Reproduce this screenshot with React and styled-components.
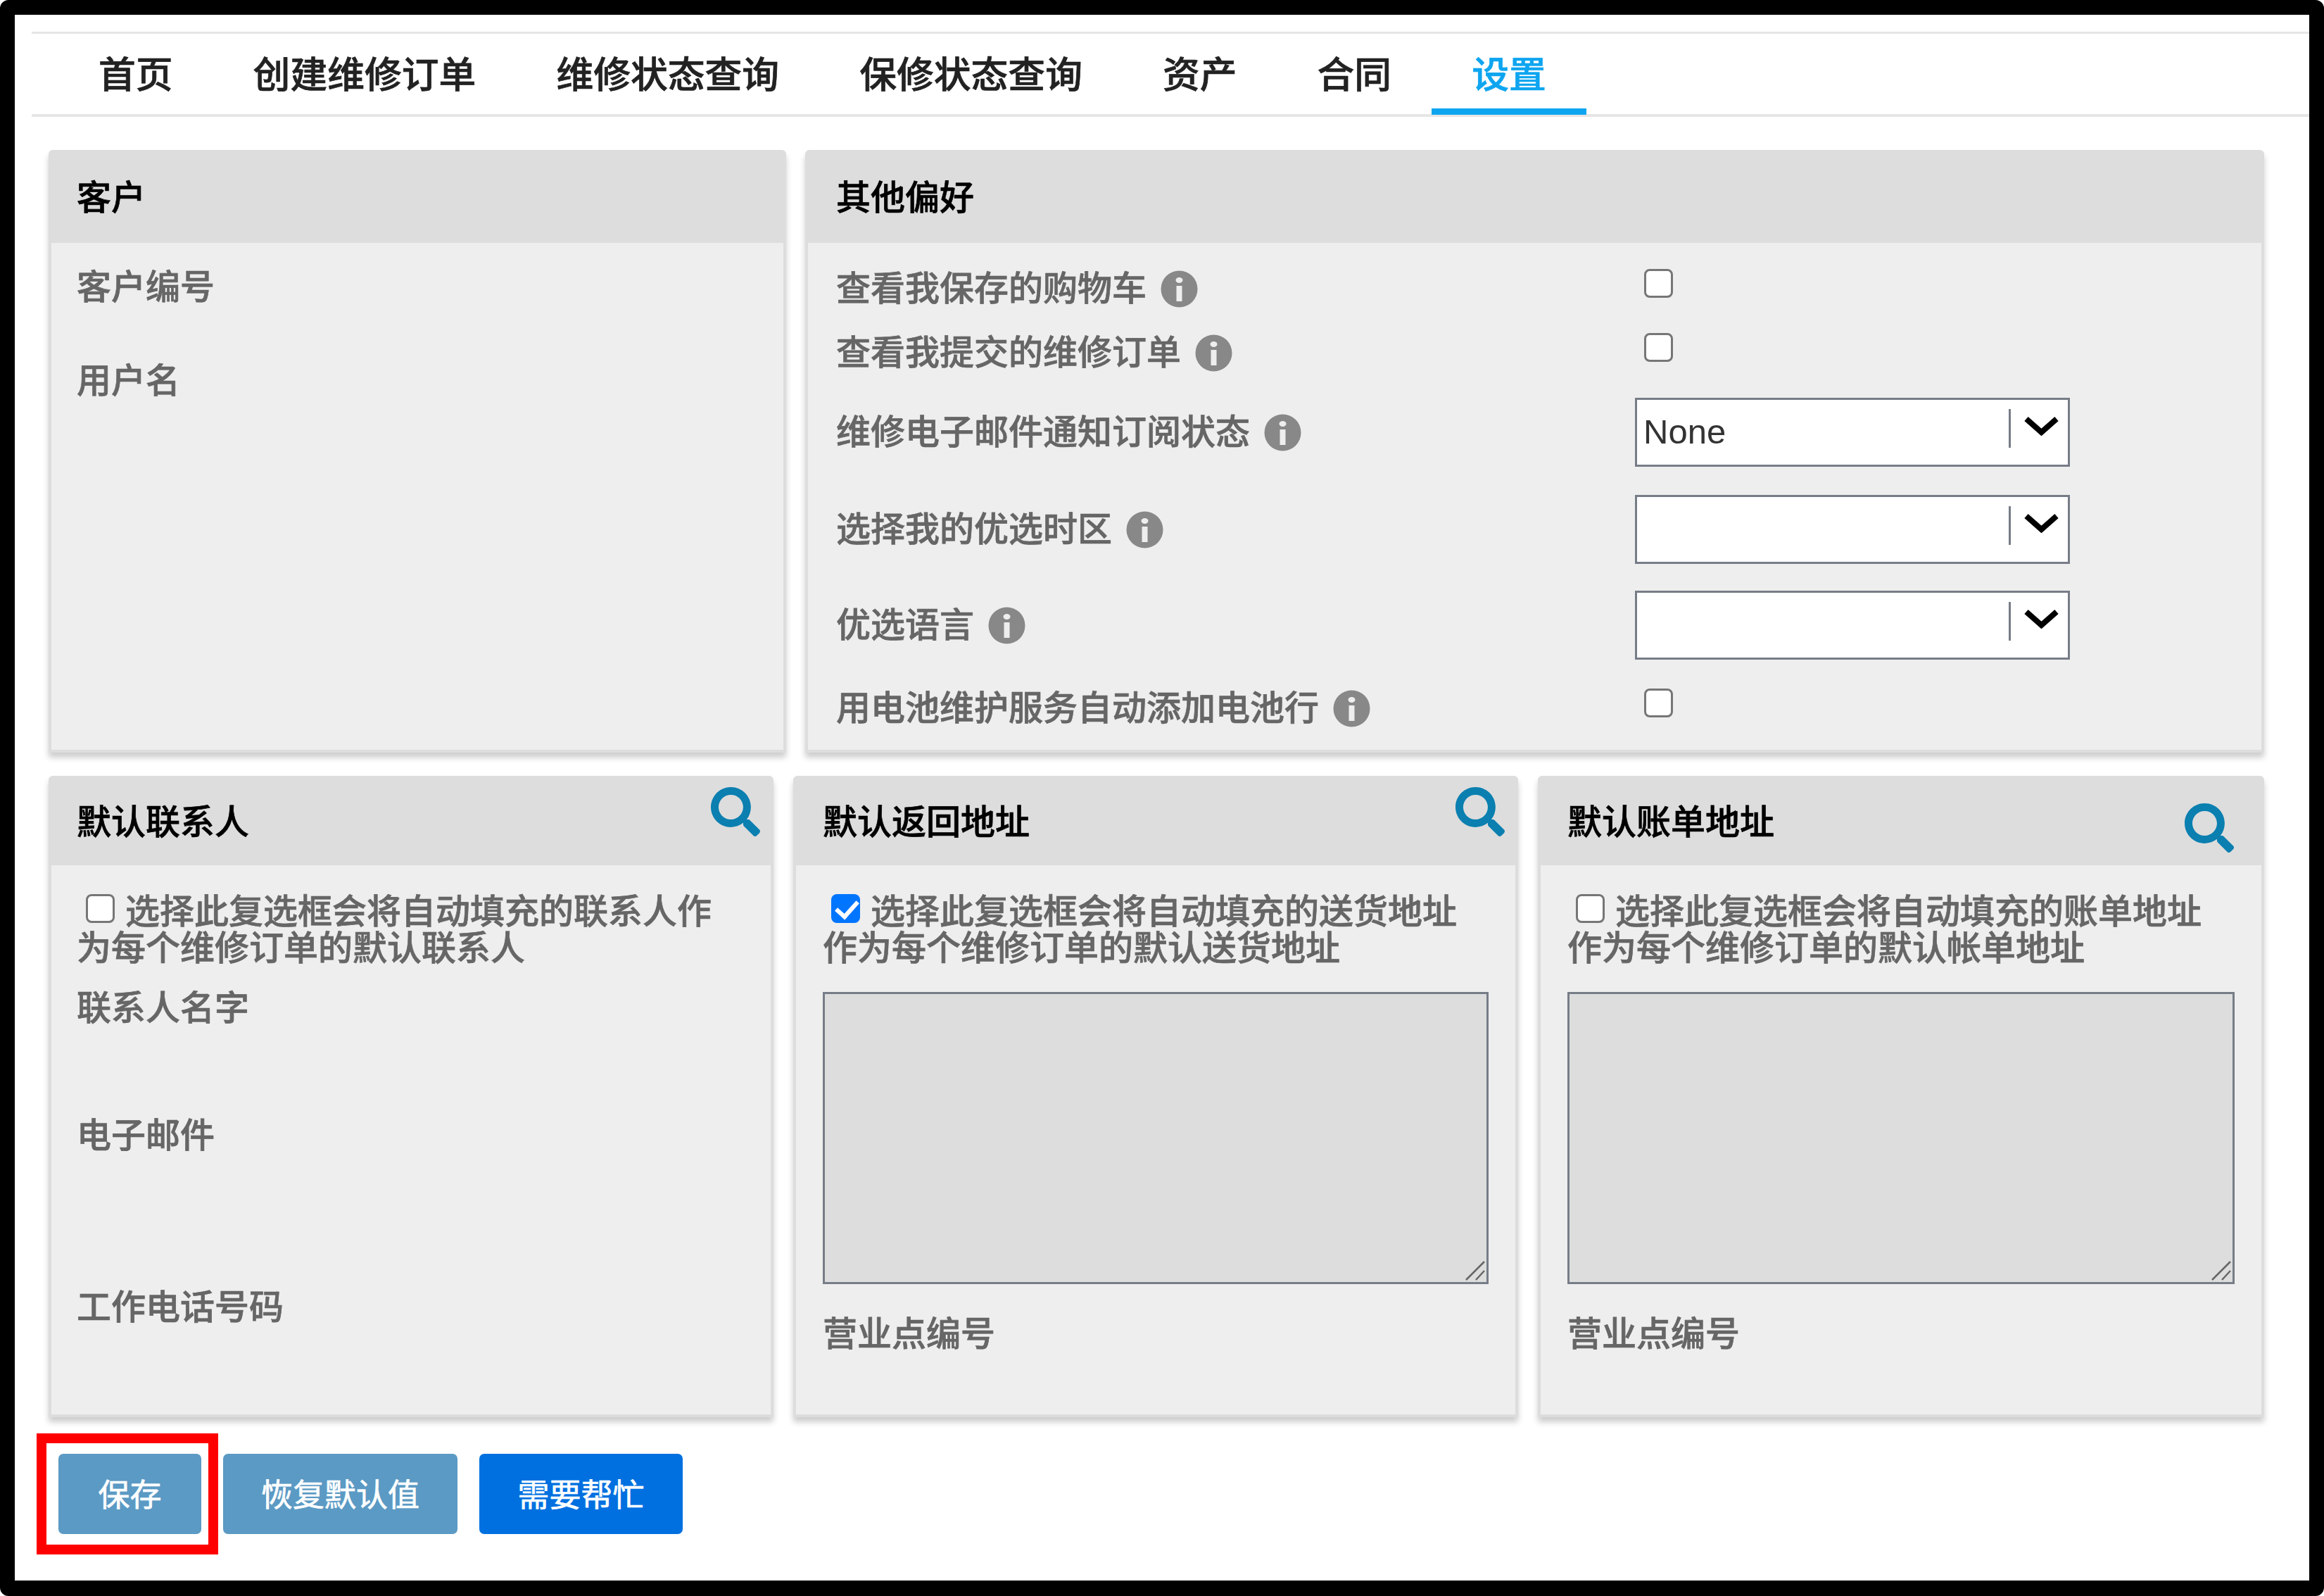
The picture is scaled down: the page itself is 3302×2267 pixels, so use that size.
import React from 'react';
import styled, { createGlobalStyle } from 'styled-components';
import { FaSearch } from 'react-icons/fa';

const GlobalStyle = createGlobalStyle`
  html, body {
    margin: 0;
    padding: 0;
    background: #ffffff;
  }
  * {
    box-sizing: border-box;
  }
`;

const FONT = `"Liberation Sans", "Noto Sans CJK SC", sans-serif`;

const Frame = styled.div`
  width: 3302px;
  height: 2267px;
  border: solid #000000;
  border-width: 21px 21px 22px 21px;
  border-radius: 12px;
  background: #ffffff;
  padding-top: 24px;
  position: relative;
  font-family: ${FONT};
  font-size: 49px;
  line-height: 52px;
  color: #666666;
  -webkit-text-stroke: 0.7px currentColor;
`;

const TabBar = styled.nav`
  display: flex;
  height: 121px;
  margin-left: 24px;
  padding-left: 38px;
  border-top: 3px solid #e6e6e6;
  border-bottom: 4px solid #e6e6e6;
`;

const Tab = styled.a`
  display: flex;
  align-items: center;
  height: 115px;
  padding: 12px 57px 0;
  border-bottom: 9px solid ${(p) => (p.$active ? '#0ea5f0' : 'transparent')};
  font-size: 52.8px;
  font-weight: 500;
  color: ${(p) => (p.$active ? '#0ea5f0' : '#222222')};
  white-space: nowrap;
`;

const Panels = styled.div`
  display: flex;
  flex-direction: column;
  gap: 33px;
  margin: 47px 0 0 48px;
  width: 3148px;
`;

const TopRow = styled.div`
  display: grid;
  grid-template-columns: 1048px 2073px;
  column-gap: 27px;
  height: 856px;
`;

const BottomRow = styled.div`
  display: grid;
  grid-template-columns: 1030px 1030px 1032px;
  column-gap: 28px;
  height: 911px;
`;

const Card = styled.section`
  display: flex;
  flex-direction: column;
  position: relative;
  border: 4px solid #dddddd;
  border-radius: 6px 6px 0 0;
  background: #eeeeee;
  box-shadow: 0 7px 9px rgba(0, 0, 0, 0.2);
`;

const CardHeader = styled.header`
  display: flex;
  align-items: center;
  height: ${(p) => p.$height}px;
  flex: none;
  padding-left: ${(p) => p.$inset || 38}px;
  background: #dddddd;
  color: #000000;
  font-weight: 500;
`;

const CardBody = styled.div`
  flex: 1;
  padding: ${(p) => p.$top}px 38px 0 ${(p) => p.$inset || 38}px;
`;

const SearchButton = styled.span`
  position: absolute;
  top: ${(p) => p.$top}px;
  right: ${(p) => p.$right}px;
  display: flex;
  color: #0a7fb0;
  -webkit-text-stroke: 0;
`;

const FieldLabel = styled.div`
  margin-top: ${(p) => p.$mt || 0}px;
  font-weight: 500;
`;

const PrefRow = styled.div`
  display: grid;
  grid-template-columns: 1135px 618px;
  align-items: center;
  height: ${(p) => p.$height || 64}px;
  margin-top: ${(p) => p.$mt || 0}px;
`;

const PrefLabel = styled.span`
  display: flex;
  align-items: center;
  gap: 20px;
  font-weight: 500;
`;

const Checkbox = styled.input.attrs({ type: 'checkbox' })`
  appearance: none;
  display: inline-block;
  width: 41px;
  height: 41px;
  margin: 0;
  border: 3px solid #767676;
  border-radius: 8px;
  background: #ffffff;

  &:checked {
    border-color: #0075ff;
    background: #0075ff;
  }

  &:checked::after {
    content: '';
    display: block;
    width: 13px;
    height: 25px;
    margin: 0 0 0 10px;
    border: solid #ffffff;
    border-width: 0 6px 6px 0;
    transform: rotate(42deg);
  }
`;

const PrefCheckbox = styled(Checkbox)`
  margin: 0 0 15px 13px;
`;

const Select = styled.div`
  display: flex;
  align-items: center;
  justify-content: space-between;
  height: 98px;
  padding: 0 13px 3px 9px;
  border: 3px solid #777d87;
  background: #ffffff;
  color: #333333;
  font-family: "Liberation Sans", sans-serif;
  font-size: 49px;
  -webkit-text-stroke: 0;
`;

const SelectCaret = styled.span`
  display: flex;
  align-items: center;
  height: 55px;
  margin-top: -9px;
  padding: 0 0 6px 19px;
  border-left: 3px solid #777d87;
`;

const AutoFill = styled.p`
  margin: 0;
  font-weight: 500;
`;

const AutoFillCheckbox = styled(Checkbox)`
  margin: 0 15px 0 ${(p) => p.$ml}px;
  vertical-align: 1px;
`;

const AddressBox = styled.div`
  position: relative;
  height: 415px;
  margin-top: 36px;
`;

const AddressArea = styled.textarea`
  display: block;
  width: 100%;
  height: 100%;
  border: 3px solid #777d87;
  background: #dddddd;
  resize: none;
`;

const Grip = styled.svg`
  position: absolute;
  right: 5px;
  bottom: 5px;
`;

const ButtonRow = styled.div`
  display: flex;
  gap: 31px;
  position: relative;
  margin: 52px 0 0 62px;
`;

const ActionButton = styled.button`
  width: ${(p) => p.$width}px;
  height: 114px;
  padding: 0 0 4px;
  border: none;
  border-radius: 7px;
  background: ${(p) => (p.$primary ? '#0070e0' : '#5b9ac4')};
  color: #ffffff;
  font-family: ${FONT};
  font-size: 45px;
`;

const Highlight = styled.div`
  position: absolute;
  left: -31px;
  top: -29px;
  width: 258px;
  height: 172px;
  border: 14px solid #ff0000;
  pointer-events: none;
`;

const tabs = ['首页', '创建维修订单', '维修状态查询', '保修状态查询', '资产', '合同', '设置'];

const InfoIcon = () => (
  <svg width="53" height="53" viewBox="0 0 53 53">
    <circle cx="26.5" cy="26.5" r="26" fill="#888888" />
    <ellipse cx="26.5" cy="14" rx="5" ry="4" fill="#eeeeee" />
    <rect x="22.5" y="22" width="8" height="22" fill="#eeeeee" />
  </svg>
);

const Chevron = () => (
  <svg width="49" height="28" viewBox="0 0 49 28">
    <path d="M3 4 L24.5 23 L46 4" fill="none" stroke="#000000" strokeWidth="8" />
  </svg>
);

const SearchIcon = ({ top, right }) => (
  <SearchButton $top={top} $right={right}>
    <FaSearch size={70} />
  </SearchButton>
);

const SelectBox = ({ value }) => (
  <Select>
    <span>{value}</span>
    <SelectCaret>
      <Chevron />
    </SelectCaret>
  </Select>
);

const Address = ({ title, checked, line1, line2, ml }) => (
  <Card>
    <CardHeader $height={123}>{title}</CardHeader>
    <SearchIcon top={title === '默认账单地址' ? 35 : 12} right={title === '默认账单地址' ? 39 : 15} />
    <CardBody $top={40}>
      <AutoFill>
        <AutoFillCheckbox $ml={ml} defaultChecked={checked} />
        {line1}
        <br />
        {line2}
      </AutoFill>
      <AddressBox>
        <AddressArea readOnly />
        <Grip width="29" height="28" viewBox="0 0 29 28">
          <path d="M2 27 L28 1 M16 27 L28 14" fill="none" stroke="#666666" strokeWidth="2.5" />
        </Grip>
      </AddressBox>
      <FieldLabel $mt={45}>营业点编号</FieldLabel>
    </CardBody>
  </Card>
);

const App = () => (
  <>
    <GlobalStyle />
    <Frame>
      <TabBar>
        {tabs.map((tab) => (
          <Tab key={tab} $active={tab === '设置'}>{tab}</Tab>
        ))}
      </TabBar>
      <Panels>
        <TopRow>
          <Card>
            <CardHeader $height={128} $inset={36}>客户</CardHeader>
            <CardBody $top={37} $inset={36}>
              <FieldLabel>客户编号</FieldLabel>
              <FieldLabel $mt={81}>用户名</FieldLabel>
            </CardBody>
          </Card>
          <Card>
            <CardHeader $height={128} $inset={40}>其他偏好</CardHeader>
            <CardBody $top={33} $inset={40}>
              <PrefRow>
                <PrefLabel>查看我保存的购物车 <InfoIcon /></PrefLabel>
                <PrefCheckbox />
              </PrefRow>
              <PrefRow $mt={27}>
                <PrefLabel>查看我提交的维修订单 <InfoIcon /></PrefLabel>
                <PrefCheckbox />
              </PrefRow>
              <PrefRow $mt={32} $height={98}>
                <PrefLabel>维修电子邮件通知订阅状态 <InfoIcon /></PrefLabel>
                <SelectBox value="None" />
              </PrefRow>
              <PrefRow $mt={40} $height={98}>
                <PrefLabel>选择我的优选时区 <InfoIcon /></PrefLabel>
                <SelectBox />
              </PrefRow>
              <PrefRow $mt={38} $height={98}>
                <PrefLabel>优选语言 <InfoIcon /></PrefLabel>
                <SelectBox />
              </PrefRow>
              <PrefRow $mt={37}>
                <PrefLabel>用电池维护服务自动添加电池行 <InfoIcon /></PrefLabel>
                <PrefCheckbox />
              </PrefRow>
            </CardBody>
          </Card>
        </TopRow>
        <BottomRow>
          <Card>
            <CardHeader $height={123} $inset={36}>默认联系人</CardHeader>
            <SearchIcon top={12} right={15} />
            <CardBody $top={40} $inset={36}>
              <AutoFill>
                <AutoFillCheckbox $ml={13} />
                选择此复选框会将自动填充的联系人作
                <br />
                为每个维修订单的默认联系人
              </AutoFill>
              <FieldLabel $mt={33}>联系人名字</FieldLabel>
              <FieldLabel $mt={129}>电子邮件</FieldLabel>
              <FieldLabel $mt={192}>工作电话号码</FieldLabel>
            </CardBody>
          </Card>
          <Address
            title="默认返回地址"
            checked
            ml={12}
            line1="选择此复选框会将自动填充的送货地址"
            line2="作为每个维修订单的默认送货地址"
          />
          <Address
            title="默认账单地址"
            ml={12}
            line1="选择此复选框会将自动填充的账单地址"
            line2="作为每个维修订单的默认帐单地址"
          />
        </BottomRow>
      </Panels>
      <ButtonRow>
        <ActionButton $width={203}>保存</ActionButton>
        <ActionButton $width={333}>恢复默认值</ActionButton>
        <ActionButton $width={289} $primary>需要帮忙</ActionButton>
        <Highlight />
      </ButtonRow>
    </Frame>
  </>
);

export default App;
